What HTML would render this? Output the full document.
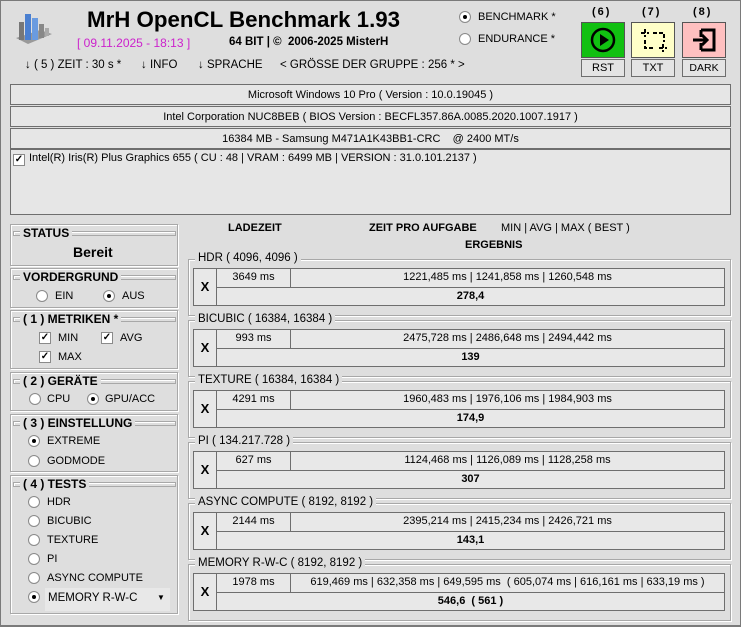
<!DOCTYPE html>
<html><head><meta charset="utf-8"><style>
*{box-sizing:border-box;margin:0;padding:0}
body{width:741px;height:627px;background:#dedede;font-family:"Liberation Sans",Tahoma,sans-serif;font-size:11px;color:#000;position:relative;overflow:hidden}
.a{position:absolute;white-space:nowrap}
.b{font-weight:bold}
.box{position:absolute;border:1px solid #6e6e6e;background:#e6e6e6}
.fr{position:absolute;border:1px solid #a8a8a8;box-shadow:inset 1px 1px 0 #fff,1px 1px 0 #fff}
.hl{position:absolute;height:5px;border:1px solid #a8a8a8;box-shadow:inset 1px 1px 0 #fff}
.lbl{position:absolute;background:#dedede;padding:0 3px;white-space:nowrap;line-height:13px}
.r{position:absolute;width:12px;height:12px;border-radius:50%;border:1px solid #8a8a8a;background:radial-gradient(circle,#fff 60%,#ddd)}
.r.on::after{content:"";position:absolute;left:3px;top:3px;width:4px;height:4px;border-radius:50%;background:#000}
.c{position:absolute;width:12px;height:12px;border:1px solid #8a8a8a;background:#fff;font-size:10px;line-height:10px;text-align:center;font-weight:bold}
.cell{position:absolute;border:1px solid #6e6e6e;background:#e8e8e8;text-align:center;line-height:17px}
</style></head><body>
<div style="position:absolute;left:0;top:0;width:741px;height:627px;border:1px solid #7a7a7a;border-bottom-width:2px"></div>

<svg class="a" style="left:14px;top:8px" width="40" height="38" viewBox="0 0 40 38">
<polygon points="2,30 14,36 38,26 26,22" fill="#999"/>
<rect x="5" y="14" width="5" height="18" fill="#777"/>
<rect x="11" y="6" width="6" height="26" fill="#4a7fd0"/>
<rect x="18" y="10" width="6" height="22" fill="#6a9be0"/>
<rect x="25" y="16" width="5" height="14" fill="#888"/>
<rect x="31" y="20" width="4" height="8" fill="#aaa"/>
</svg>
<div class="a b" style="left:87px;top:7px;font-size:22.3px">MrH OpenCL Benchmark 1.93</div>
<div class="a" style="left:77px;top:36px;color:#cc22cc;font-size:12px">[ 09.11.2025 - 18:13 ]</div>
<div class="a b" style="left:229px;top:36px;font-size:11.5px">64 BIT | ©&nbsp; 2006-2025 MisterH</div>
<div class="a" style="left:25px;top:59px;font-size:11.5px">↓ ( 5 ) ZEIT : 30 s *</div>
<div class="a" style="left:141px;top:59px;font-size:11.5px">↓ INFO</div>
<div class="a" style="left:198px;top:59px;font-size:11.5px">↓ SPRACHE</div>
<div class="a" style="left:280px;top:59px;font-size:11.5px">&lt; GRÖSSE DER GRUPPE : 256 * &gt;</div>

<div class="r on" style="left:459px;top:11px"></div><div class="a" style="left:478px;top:11px">BENCHMARK *</div>
<div class="r" style="left:459px;top:33px"></div><div class="a" style="left:478px;top:33px">ENDURANCE *</div>

<div class="a b" style="left:592px;top:6px;letter-spacing:2px">(6)</div>
<div class="a b" style="left:642px;top:6px;letter-spacing:2px">(7)</div>
<div class="a b" style="left:693px;top:6px;letter-spacing:2px">(8)</div>
<div class="box" style="left:581px;top:22px;width:44px;height:36px;background:#11c011;border-color:#555"></div>
<svg class="a" style="left:590px;top:27px" width="26" height="26"><circle cx="13" cy="13" r="11" fill="none" stroke="#000" stroke-width="2.5"/><polygon points="10,7 10,19 19,13" fill="#000"/></svg>
<div class="box" style="left:631px;top:22px;width:44px;height:36px;background:#ffffc8;border-color:#555"></div>
<svg class="a" style="left:641px;top:28px" width="26" height="25"><path d="M4 1v8M0 5h8M22 16v8M18 20h8M12 5h11v9M4 12v8h10" fill="none" stroke="#000" stroke-width="2" stroke-dasharray="4 2"/></svg>
<div class="box" style="left:682px;top:22px;width:44px;height:36px;background:#ffc0c0;border-color:#555"></div>
<svg class="a" style="left:692px;top:27px" width="26" height="26"><path d="M9 3h13v20H9M9 10V3M9 16v7" fill="none" stroke="#000" stroke-width="3"/><path d="M1 13h13M10 8l5 5-5 5" fill="none" stroke="#000" stroke-width="3"/></svg>
<div class="box" style="left:581px;top:59px;width:44px;height:18px;background:#e4e4e4;text-align:center;line-height:17px">RST</div>
<div class="box" style="left:631px;top:59px;width:44px;height:18px;background:#e4e4e4;text-align:center;line-height:17px">TXT</div>
<div class="box" style="left:682px;top:59px;width:44px;height:18px;background:#e4e4e4;text-align:center;line-height:17px;font-size:10.5px">DARK</div>

<div class="box" style="left:10px;top:84px;width:721px;height:21px;text-align:center;line-height:20px">Microsoft Windows 10 Pro ( Version : 10.0.19045 )</div>
<div class="box" style="left:10px;top:106px;width:721px;height:21px;text-align:center;line-height:20px">Intel Corporation NUC8BEB ( BIOS Version : BECFL357.86A.0085.2020.1007.1917 )</div>
<div class="box" style="left:10px;top:128px;width:721px;height:21px;text-align:center;line-height:20px">16384 MB - Samsung M471A1K43BB1-CRC &nbsp;&nbsp; @ 2400 MT/s</div>
<div class="box" style="left:10px;top:149px;width:721px;height:66px"></div>
<div class="c" style="left:13px;top:154px">✓</div>
<div class="a" style="left:29px;top:152px">Intel(R) Iris(R) Plus Graphics 655 ( CU : 48 | VRAM : 6499 MB | VERSION : 31.0.101.2137 )</div>

<div class="a b" style="left:228px;top:222px">LADEZEIT</div>
<div class="a b" style="left:369px;top:222px">ZEIT PRO AUFGABE</div>
<div class="a" style="left:501px;top:222px">MIN | AVG | MAX ( BEST )</div>
<div class="a b" style="left:465px;top:239px">ERGEBNIS</div>

<div class="fr" style="left:10px;top:224px;width:168px;height:42px"></div>
<div class="hl" style="left:13px;top:231px;width:163px"></div><div class="lbl b" style="left:20px;top:227px;font-size:12px">STATUS</div>
<div class="a b" style="left:73px;top:244px;font-size:14px">Bereit</div>

<div class="fr" style="left:10px;top:268px;width:168px;height:40px"></div>
<div class="hl" style="left:13px;top:275px;width:163px"></div><div class="lbl b" style="left:20px;top:271px;font-size:12px">VORDERGRUND</div>
<div class="r" style="left:36px;top:290px"></div><div class="a" style="left:55px;top:290px">EIN</div>
<div class="r on" style="left:103px;top:290px"></div><div class="a" style="left:122px;top:290px">AUS</div>

<div class="fr" style="left:10px;top:310px;width:168px;height:59px"></div>
<div class="hl" style="left:13px;top:317px;width:163px"></div><div class="lbl b" style="left:20px;top:313px;font-size:12px">( 1 ) METRIKEN *</div>
<div class="c" style="left:39px;top:332px">✓</div><div class="a" style="left:58px;top:332px">MIN</div>
<div class="c" style="left:101px;top:332px">✓</div><div class="a" style="left:120px;top:332px">AVG</div>
<div class="c" style="left:39px;top:351px">✓</div><div class="a" style="left:58px;top:351px">MAX</div>

<div class="fr" style="left:10px;top:372px;width:168px;height:39px"></div>
<div class="hl" style="left:13px;top:379px;width:163px"></div><div class="lbl b" style="left:20px;top:375px;font-size:12px">( 2 ) GERÄTE</div>
<div class="r" style="left:29px;top:393px"></div><div class="a" style="left:47px;top:393px">CPU</div>
<div class="r on" style="left:87px;top:393px"></div><div class="a" style="left:105px;top:393px">GPU/ACC</div>

<div class="fr" style="left:10px;top:414px;width:168px;height:58px"></div>
<div class="hl" style="left:13px;top:421px;width:163px"></div><div class="lbl b" style="left:20px;top:417px;font-size:12px">( 3 ) EINSTELLUNG</div>
<div class="r on" style="left:28px;top:435px"></div><div class="a" style="left:47px;top:435px">EXTREME</div>
<div class="r" style="left:28px;top:455px"></div><div class="a" style="left:47px;top:455px">GODMODE</div>

<div class="fr" style="left:10px;top:475px;width:168px;height:139px"></div>
<div class="hl" style="left:13px;top:482px;width:163px"></div><div class="lbl b" style="left:20px;top:478px;font-size:12px">( 4 ) TESTS</div>
<div class="r" style="left:28px;top:496px"></div><div class="a" style="left:47px;top:496px">HDR</div>
<div class="r" style="left:28px;top:515px"></div><div class="a" style="left:47px;top:515px">BICUBIC</div>
<div class="r" style="left:28px;top:534px"></div><div class="a" style="left:47px;top:534px">TEXTURE</div>
<div class="r" style="left:28px;top:553px"></div><div class="a" style="left:47px;top:553px">PI</div>
<div class="r" style="left:28px;top:572px"></div><div class="a" style="left:47px;top:572px">ASYNC COMPUTE</div>
<div class="r on" style="left:28px;top:591px"></div>
<div class="a" style="left:45px;top:588px;width:125px;height:23px;background:#e8e8e8;padding:4px 0 0 3px;font-size:11.5px">MEMORY R-W-C</div>
<div class="a" style="left:157px;top:593px;font-size:8px">▼</div>

<div id="groups"></div>
<script>
var G=[["HDR ( 4096, 4096 )","3649 ms","1221,485 ms | 1241,858 ms | 1260,548 ms","278,4"],
["BICUBIC ( 16384, 16384 )","993 ms","2475,728 ms | 2486,648 ms | 2494,442 ms","139"],
["TEXTURE ( 16384, 16384 )","4291 ms","1960,483 ms | 1976,106 ms | 1984,903 ms","174,9"],
["PI ( 134.217.728 )","627 ms","1124,468 ms | 1126,089 ms | 1128,258 ms","307"],
["ASYNC COMPUTE ( 8192, 8192 )","2144 ms","2395,214 ms | 2415,234 ms | 2426,721 ms","143,1"],
["MEMORY R-W-C ( 8192, 8192 )","1978 ms","619,469 ms | 632,358 ms | 649,595 ms &nbsp;( 605,074 ms | 616,161 ms | 633,19 ms )","546,6 &nbsp;( 561 )"]];
var h="";
G.forEach(function(g,i){var y=259+i*61;
h+='<div class="fr" style="left:188px;top:'+y+'px;width:543px;height:57px"></div>';
h+='<div class="lbl" style="left:195px;top:'+(y-7)+'px;font-size:11.5px">'+g[0]+'</div>';
h+='<div class="cell b" style="left:193px;top:'+(y+9)+'px;width:24px;height:38px;line-height:36px;font-size:13px">X</div>';
h+='<div class="cell" style="left:216px;top:'+(y+9)+'px;width:75px;height:20px">'+g[1]+'</div>';
h+='<div class="cell" style="left:290px;top:'+(y+9)+'px;width:435px;height:20px;white-space:nowrap">'+g[2]+'</div>';
h+='<div class="cell b" style="left:216px;top:'+(y+28)+'px;width:509px;height:19px">'+g[3]+'</div>';});
document.getElementById("groups").innerHTML=h;
</script>
</body></html>
